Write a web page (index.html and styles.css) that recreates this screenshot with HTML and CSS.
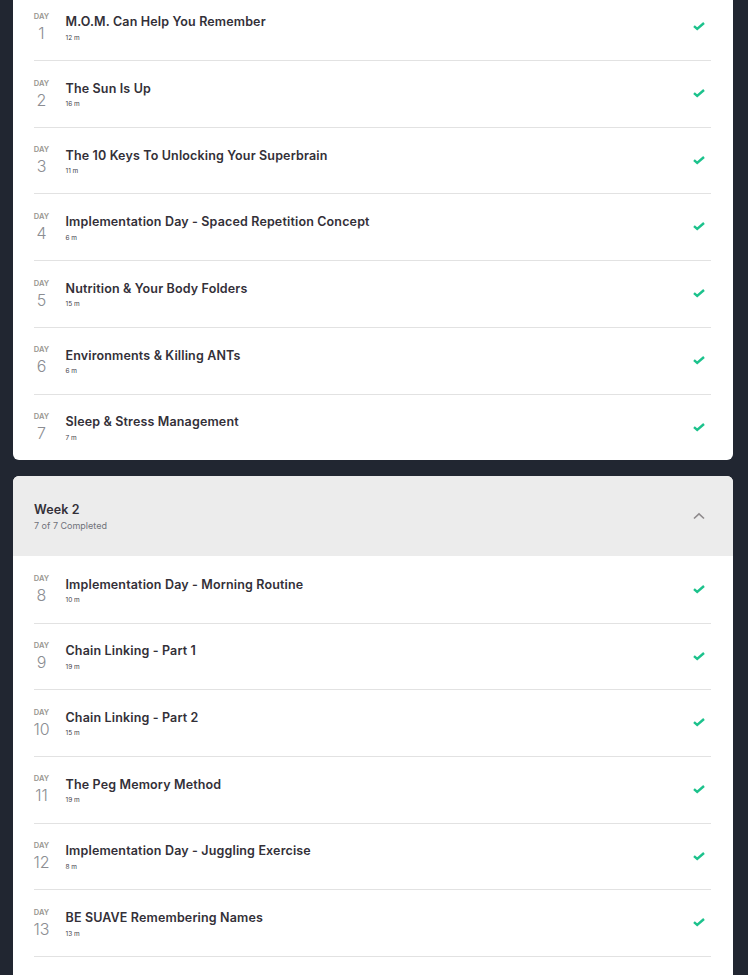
FILE: index.html
```html
<!DOCTYPE html>
<html lang="en">
<head>
<meta charset="utf-8">
<title>Course</title>
<link rel="stylesheet" href="styles.css">
</head>
<body>
<svg class="defs" width="0" height="0" aria-hidden="true"><defs>
<symbol id="check" viewBox="0 0 12 10"><path d="M1 5.2 4.2 8 11 2" fill="none" stroke="currentColor" stroke-width="2.4"/></symbol>
</defs></svg>
<main class="page">
<section class="card">
<ul class="list">
<li class="row"><div class="day"><span class="day-label">DAY</span><span class="day-num">1</span></div><div class="info"><h3 class="title">M.O.M. Can Help You Remember</h3><p class="time">12 m</p></div><svg class="check"><use href="#check"/></svg></li>
<li class="row"><div class="day"><span class="day-label">DAY</span><span class="day-num">2</span></div><div class="info"><h3 class="title">The Sun Is Up</h3><p class="time">16 m</p></div><svg class="check"><use href="#check"/></svg></li>
<li class="row"><div class="day"><span class="day-label">DAY</span><span class="day-num">3</span></div><div class="info"><h3 class="title">The 10 Keys To Unlocking Your Superbrain</h3><p class="time">11 m</p></div><svg class="check"><use href="#check"/></svg></li>
<li class="row"><div class="day"><span class="day-label">DAY</span><span class="day-num">4</span></div><div class="info"><h3 class="title">Implementation Day - Spaced Repetition Concept</h3><p class="time">6 m</p></div><svg class="check"><use href="#check"/></svg></li>
<li class="row"><div class="day"><span class="day-label">DAY</span><span class="day-num">5</span></div><div class="info"><h3 class="title">Nutrition &amp; Your Body Folders</h3><p class="time">15 m</p></div><svg class="check"><use href="#check"/></svg></li>
<li class="row"><div class="day"><span class="day-label">DAY</span><span class="day-num">6</span></div><div class="info"><h3 class="title">Environments &amp; Killing ANTs</h3><p class="time">6 m</p></div><svg class="check"><use href="#check"/></svg></li>
<li class="row last"><div class="day"><span class="day-label">DAY</span><span class="day-num">7</span></div><div class="info"><h3 class="title">Sleep &amp; Stress Management</h3><p class="time">7 m</p></div><svg class="check"><use href="#check"/></svg></li>
</ul>
</section>
<section class="card card-open">
<header class="week">
<div><h2 class="week-title">Week 2</h2><p class="week-sub">7 of 7 Completed</p></div>
<svg class="chev" viewBox="0 0 12 8"><path d="M1 6.5 6 1.8 11 6.5" fill="none" stroke="currentColor" stroke-width="1.6"/></svg>
</header>
<ul class="list list-open">
<li class="row"><div class="day"><span class="day-label">DAY</span><span class="day-num">8</span></div><div class="info"><h3 class="title">Implementation Day - Morning Routine</h3><p class="time">10 m</p></div><svg class="check"><use href="#check"/></svg></li>
<li class="row"><div class="day"><span class="day-label">DAY</span><span class="day-num">9</span></div><div class="info"><h3 class="title">Chain Linking - Part 1</h3><p class="time">19 m</p></div><svg class="check"><use href="#check"/></svg></li>
<li class="row"><div class="day"><span class="day-label">DAY</span><span class="day-num">10</span></div><div class="info"><h3 class="title">Chain Linking - Part 2</h3><p class="time">15 m</p></div><svg class="check"><use href="#check"/></svg></li>
<li class="row"><div class="day"><span class="day-label">DAY</span><span class="day-num">11</span></div><div class="info"><h3 class="title">The Peg Memory Method</h3><p class="time">19 m</p></div><svg class="check"><use href="#check"/></svg></li>
<li class="row"><div class="day"><span class="day-label">DAY</span><span class="day-num">12</span></div><div class="info"><h3 class="title">Implementation Day - Juggling Exercise</h3><p class="time">8 m</p></div><svg class="check"><use href="#check"/></svg></li>
<li class="row"><div class="day"><span class="day-label">DAY</span><span class="day-num">13</span></div><div class="info"><h3 class="title">BE SUAVE Remembering Names</h3><p class="time">13 m</p></div><svg class="check"><use href="#check"/></svg></li>
</ul>
</section>
</main>
</body>
</html>
```
FILE: styles.css
```css
* { box-sizing: border-box; }
html, body { margin: 0; height: 975px; overflow: hidden; background: #212631; }
.defs { display: block; height: 0; }
.page {
  display: flex; flex-direction: column; gap: 16px;
  margin-top: -5.6px; padding: 0 15px 0 13px;
  font-family: "Inter", "Liberation Sans", sans-serif; color: #333038;
}
.card { background: #fff; border-radius: 6px; overflow: hidden; }
.card-open { padding-bottom: 60px; }
.list { list-style: none; margin: 0; padding: 0 22px 0 20.5px; }
.list-open { padding-top: .6px; }
.row {
  display: flex; align-items: flex-start; height: 66.7px;
  padding-top: 17px; border-bottom: 1px solid #e2e2e2;
}
.row.last { border-bottom: 0; height: 65.7px; }
.day { width: 32px; display: flex; flex-direction: column; align-items: center; padding-right: 16px; flex: none; color: #8b8d92; }
.day-label { font-size: 7.5px; font-weight: 600; line-height: 10px; margin-top: .6px; color: #98968f; white-space: nowrap; }
.day-num { font-size: 16px; font-weight: 300; line-height: 22px; }
.info { flex: 1; min-width: 0; padding-top: 1.9px; }
.title { margin: 0; font-size: 12.5px; line-height: 18px; font-weight: 600; letter-spacing: .15px; }
.time { margin: 2.4px 0 0; font-size: 6.5px; line-height: 9px; color: #44424a; }
.check { width: 12px; height: 10px; margin: 10px 6px 0 0; color: #1cc28c; flex: none; }
.week {
  display: flex; align-items: center; justify-content: space-between;
  height: 80px; padding: 0 28px 0 21px; background: #ececec;
}
.week-title { margin: 0; font-size: 12.5px; line-height: 18px; font-weight: 600; letter-spacing: .1px; }
.week-sub { margin: 0; font-size: 9px; line-height: 13px; color: #70727a; }
.chev { width: 12px; height: 8px; color: #8e8a8c; }
```
